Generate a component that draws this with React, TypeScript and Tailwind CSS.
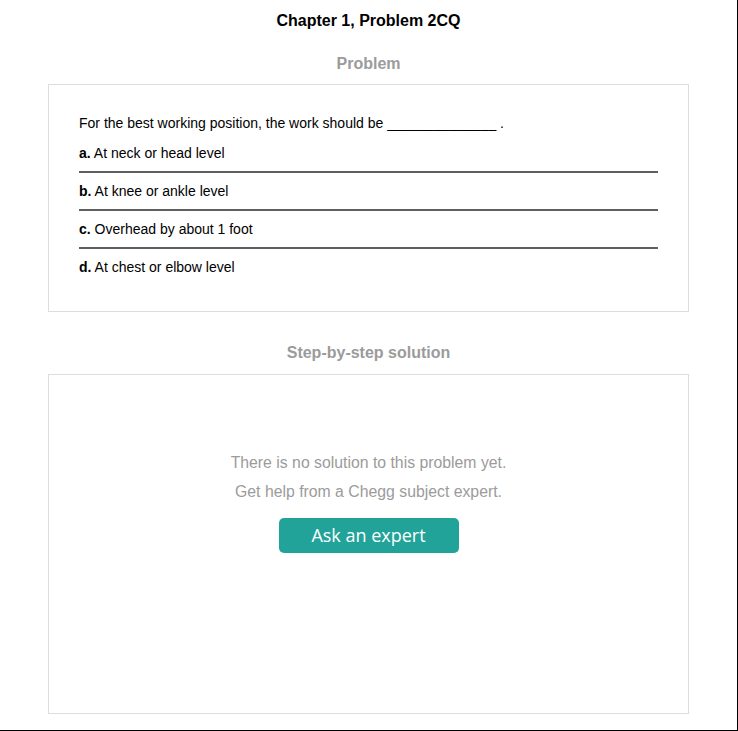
const options = [
  { letter: 'a.', text: 'At neck or head level' },
  { letter: 'b.', text: 'At knee or ankle level' },
  { letter: 'c.', text: 'Overhead by about 1 foot' },
  { letter: 'd.', text: 'At chest or elbow level' },
]

export default function App() {
  return (
    <div className="w-[738px] h-[731px] bg-white border-r border-b border-black font-['Liberation_Sans',Arial,sans-serif] text-black">
      <div className="px-12">
        {/* Title */}
        <h1 className="pt-[12px] text-center text-[16px] leading-[18px] font-bold">Chapter 1, Problem 2CQ</h1>

        {/* Problem */}
        <h2 className="mt-[25px] text-center text-[16px] leading-[18px] font-bold text-[#9b9b9b]">Problem</h2>
        <div className="mt-[11px] border border-[#dddddd] px-[30px] pt-[30px] pb-[36px]">
          <p className="text-[14px] leading-4">For the best working position, the work should be ______________ .</p>
          <div className="mt-[14px]">
            {options.map((o, i) => (
              <div key={o.letter}>
                <p className="text-[14px] leading-4">
                  <span className="font-bold">{o.letter}</span> {o.text}
                </p>
                {i < options.length - 1 && <div className="my-[10px] h-[2px] bg-[#5f5f5f]" />}
              </div>
            ))}
          </div>
        </div>

        {/* Solution */}
        <h2 className="mt-8 text-center text-[16px] leading-[18px] font-bold text-[#9b9b9b]">Step-by-step solution</h2>
        <div className="mt-3 h-[340px] border border-[#dddddd] pt-[73px] flex flex-col items-center">
          <p className="text-[15.8px] leading-[29px] text-[#9b9b9b]">There is no solution to this problem yet.</p>
          <p className="text-[15.8px] leading-[29px] text-[#9b9b9b]">Get help from a Chegg subject expert.</p>
          <button className="mt-3 w-[180px] h-[35px] rounded-[5px] bg-[#21a39a] text-white text-[18px] font-['Open_Sans',sans-serif]">
            Ask an expert
          </button>
        </div>
      </div>
    </div>
  )
}
